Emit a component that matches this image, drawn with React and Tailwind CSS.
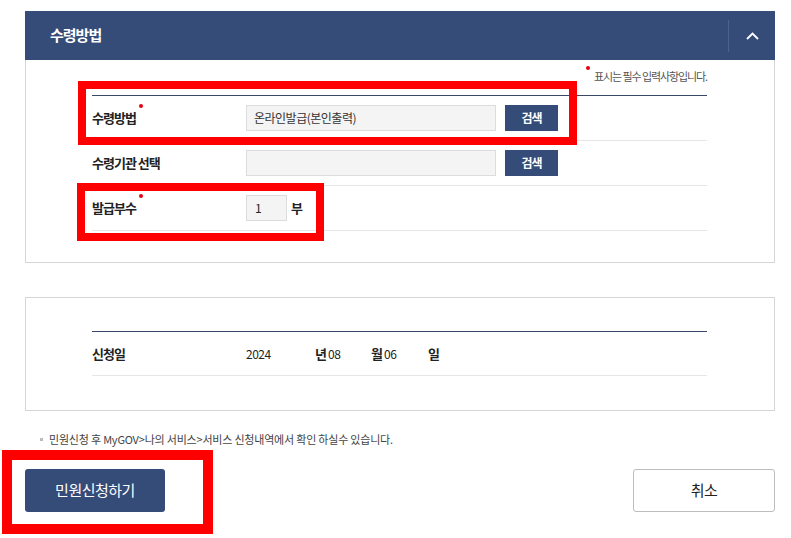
const font = { fontFamily: '"Noto Sans CJK KR", "Noto Sans", sans-serif' };

function Req() {
  return <span className="absolute -right-[7px] -top-[4px] h-[4px] w-[4px] rounded-full bg-[#e60012]"></span>;
}

function Row({ label, required, children }) {
  return (
    <div className="flex h-[45px] items-center border-b border-[#e6e6e6]">
      <div className="w-[154px] text-[13px] font-bold tracking-[-1px] text-[#222]">
        <span className="relative">
          {label}
          {required && <Req />}
        </span>
      </div>
      <div className="flex items-center">{children}</div>
    </div>
  );
}

function SearchBtn() {
  return (
    <button className="ml-[9px] h-[26px] w-[53px] bg-[#354b78] text-[12px] font-bold tracking-[-1px] text-white">
      검색
    </button>
  );
}

export default function App() {
  return (
    <div className="relative h-[538px] w-[791px] overflow-hidden bg-white pl-[25px] pr-[16px] pt-[11px]" style={font}>
      {/* 수령방법 panel */}
      <div className="flex h-[49px] items-center justify-between bg-[#354b78]">
        <h2 className="pl-[25px] text-[15px] font-bold tracking-[-1px] text-white">수령방법</h2>
        <div className="flex h-full items-center">
          <div className="h-[32px] w-px bg-[#4c6290]"></div>
          <button className="flex h-full w-[46px] items-center justify-center">
            <svg width="13" height="8" viewBox="0 0 13 8" fill="none">
              <path d="M1 7L6.5 1.5L12 7" stroke="white" strokeWidth="1.8" />
            </svg>
          </button>
        </div>
      </div>
      <div className="border border-t-0 border-[#d5d5d5] pb-[31px]">
        <div className="ml-[66px] w-[615px]">
          <div className="flex h-[35px] justify-end pt-[9px]">
            <span className="relative text-[11px] leading-[14px] tracking-[-1.1px] text-[#555]">
              <span className="absolute -left-[8px] top-[-3px] h-[4px] w-[4px] rounded-full bg-[#e60012]"></span>
              표시는 필수 입력사항입니다.
            </span>
          </div>
          <div className="border-t border-[#3a4868]">
            <Row label="수령방법" required>
              <div className="flex h-[26px] w-[250px] items-center border border-[#dcdcdc] bg-[#f4f4f4] px-[7px] text-[12px] tracking-[-0.5px] text-[#333]">
                온라인발급(본인출력)
              </div>
              <SearchBtn />
            </Row>
            <Row label="수령기관 선택">
              <div className="h-[26px] w-[250px] border border-[#dcdcdc] bg-[#f4f4f4]"></div>
              <SearchBtn />
            </Row>
            <Row label="발급부수" required>
              <div className="flex h-[26px] w-[41px] items-center border border-[#dcdcdc] bg-[#f4f4f4] px-[8px] text-[12px] text-[#222]">
                1
              </div>
              <span className="ml-[4px] text-[13px] font-bold text-[#222]">부</span>
            </Row>
          </div>
        </div>
      </div>

      {/* 신청일 panel */}
      <div className="mt-[34px] border border-[#d5d5d5] pb-[34px] pt-[33px]">
        <div className="ml-[66px] w-[615px] border-t border-[#3a4868]">
          <div className="flex h-[44px] items-center border-b border-[#e6e6e6] text-[13px] text-[#222]">
            <div className="w-[154px] font-bold tracking-[-1px]">신청일</div>
            <span className="w-[69px] text-[12px] tracking-[-0.5px]">2024</span>
            <span className="w-[13px] font-bold">년</span>
            <span className="w-[43px] text-[12px] tracking-[-0.5px]">08</span>
            <span className="w-[13px] font-bold">월</span>
            <span className="w-[44px] text-[12px] tracking-[-0.5px]">06</span>
            <span className="font-bold">일</span>
          </div>
        </div>
      </div>

      <p className="mt-[21px] flex items-center pl-[15px] text-[11px] leading-[14px] tracking-[-0.2px] text-[#444]">
        <span className="mr-[6px] h-[3px] w-[3px] bg-[#bbb]"></span>
        민원신청 후 MyGOV&gt;나의 서비스&gt;서비스 신청내역에서 확인 하실수 있습니다.
      </p>

      <div className="mt-[23px] flex justify-between">
        <button className="h-[43px] w-[140px] rounded-[3px] bg-[#354b78] text-[15px] tracking-[-0.5px] text-white">
          민원신청하기
        </button>
        <button className="h-[43px] w-[142px] rounded-[3px] border border-[#bdbdbd] bg-white text-[15px] tracking-[-0.5px] text-[#222]">
          취소
        </button>
      </div>

      {/* red highlight overlays */}
      <div className="pointer-events-none absolute left-[78px] top-[81px] h-[64px] w-[499px] border-[8px] border-[#ff0000]"></div>
      <div className="pointer-events-none absolute left-[77px] top-[183px] h-[58px] w-[247px] border-[8px] border-[#ff0000]"></div>
      <div className="pointer-events-none absolute left-[2px] top-[450px] h-[84px] w-[211px] border-[10px] border-[#ff0000]"></div>
    </div>
  );
}
